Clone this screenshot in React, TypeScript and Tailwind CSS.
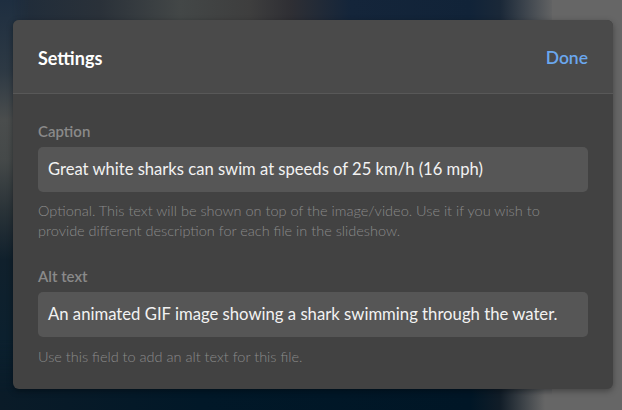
export default function App() {
  return (
    <div
      className="relative w-[622px] h-[410px] overflow-hidden bg-[#0b1d2c]"
      style={{ fontFamily: 'Lato, "Noto Sans", sans-serif' }}
    >
      <div className="absolute inset-0 bg-[linear-gradient(90deg,#1d2b3a_0px,#2a3139_100px,#434747_180px,#3e3e3e_250px,#2f2f34_290px,#14253a_350px,#112338_470px,#1a2838_500px,#666666_555px,#666666_622px)] [mask-image:linear-gradient(180deg,black_0px,black_30px,transparent_80px)]" />
      <div className="absolute inset-0 bg-[linear-gradient(180deg,#1e2e40_0px,#2d3944_70px,#4a4d4d_120px,#454949_160px,#2a3338_210px,#10202c_260px,#082030_410px)] [mask-image:linear-gradient(90deg,black_0px,black_12px,transparent_30px)]" />
      <div className="absolute inset-0 bg-[linear-gradient(90deg,#0a1b28_0px,#011828_200px,#001626_470px,#111d28_500px,#666666_545px,#666666_622px)] [mask-image:linear-gradient(180deg,transparent_0px,transparent_340px,black_395px)]" />
      <div className="absolute right-0 top-0 bottom-0 w-[70px] bg-[#666666]" />

      <div className="relative pt-[20px] pl-[13px]">
        <div className="w-[600px] rounded-[6px] overflow-hidden bg-[#424242] shadow-[0_2px_6px_rgba(0,0,0,0.35)]">
          <div className="h-[74px] pt-[4px] bg-[#4a4a4a] border-b border-[#585858] flex items-center justify-between px-[25px]">
            <span className="text-[18px] font-bold text-white">Settings</span>
            <span className="text-[17.5px] font-semibold text-[#6aa7ee]">Done</span>
          </div>
          <div className="px-[25px] pt-[27px] pb-[22px]">
            <div className="text-[15px] leading-[20px] font-semibold text-[#8a8a8a]">Caption</div>
            <div className="mt-[6px] h-[45px] rounded-[5px] bg-[#565656] flex items-center px-[10px] text-[16.6px] text-[#f2f2f2]">
              Great white sharks can swim at speeds of 25 km/h (16 mph)
            </div>
            <div className="mt-[9px] pr-[30px] text-[14.5px] leading-[20px] font-light text-[#8a8a8a]">
              Optional. This text will be shown on top of the image/video. Use it if you wish to provide different description for each file in the slideshow.
            </div>
            <div className="mt-[25px] text-[15px] leading-[20px] font-semibold text-[#8a8a8a]">Alt text</div>
            <div className="mt-[6px] h-[45px] rounded-[5px] bg-[#565656] flex items-center px-[10px] text-[16.7px] text-[#f2f2f2]">
              An animated GIF image showing a shark swimming through the water.
            </div>
            <div className="mt-[10px] text-[14.5px] leading-[20px] font-light text-[#8a8a8a]">
              Use this field to add an alt text for this file.
            </div>
          </div>
        </div>
      </div>
    </div>
  );
}
